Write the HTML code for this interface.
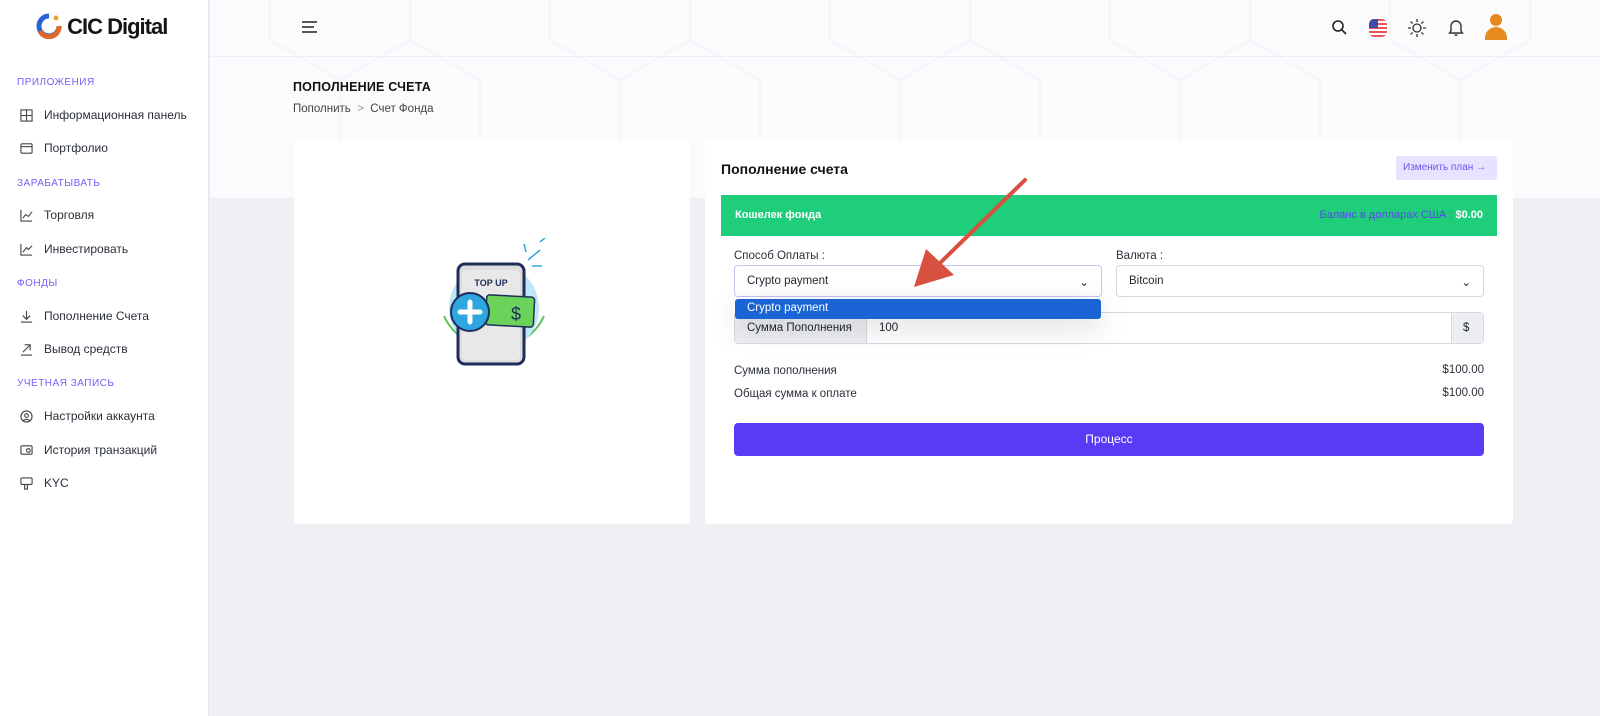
<!DOCTYPE html>
<html><head><meta charset="utf-8"><style>
*{box-sizing:border-box;margin:0;padding:0}
body{width:1600px;height:716px;overflow:hidden;font-family:"Liberation Sans",sans-serif;background:#eef0f4;position:relative;color:#1f2430}
div,span{white-space:nowrap}
.side{position:absolute;left:0;top:0;width:209px;height:716px;background:#fff;border-right:1px solid #e4e6ee}
.logo{position:absolute;left:36px;top:13px;font-weight:bold;font-size:22px;letter-spacing:-1px;color:#151515}
.sec{position:absolute;left:17px;font-size:10px;color:#7a5cf5;letter-spacing:.5px}
.it{position:absolute;left:20px;font-size:12px;color:#2a2f3a;display:flex;align-items:center;gap:11px}
.it svg{width:13px;height:13px}
.top{position:absolute;left:210px;top:0;right:0;height:198px;background:#fbfbfd}
.hdr{position:absolute;left:210px;top:0;right:0;height:57px;border-bottom:1px solid #ecedf5}
.card{position:absolute;background:#fff;border-radius:4px}
.lbl{font-size:11.5px;color:#2a2f3a}
.sel{position:absolute;height:32px;border:1px solid #d7d9e2;border-radius:4px;background:#fff;font-size:11.5px;padding:9px 12px}
</style></head><body>
<div class="top">
<svg width="1390" height="198" style="position:absolute;left:0;top:0" stroke="#f2f3f8" fill="none" stroke-width="1.5">
<path d="M60 0V40l70 40 70-40V0M130 80v118M340 0v40l70 40 70-40V0M410 80v118M620 0v40l70 40 70-40V0M690 80v118M900 0v40l70 40 70-40V0M970 80v118M1180 0v40l70 40 70-40V0M1250 80v118M200 40l70 40v118M480 40l70 40v118M760 40l70 40v118M1040 40l70 40v118"/>
</svg></div>
<div class="hdr"></div>
<div class="side">
<div class="logo"><svg width="26" height="26" viewBox="0 0 26 26" style="vertical-align:-5px"><path d="M13 3a10 10 0 1 0 10 10" stroke="#2a63d8" stroke-width="5" fill="none"/><path d="M4 18a10 10 0 0 0 19-5" stroke="#e0672a" stroke-width="5" fill="none"/><circle cx="20" cy="5" r="2.5" fill="#e7a23a"/></svg> CIC Digital</div>
<div class="sec" style="top:77px">ПРИЛОЖЕНИЯ</div>
<div class="it" style="top:108px"><svg viewBox="0 0 14 14" fill="none" stroke="#444" stroke-width="1.2"><rect x="1" y="1" width="12" height="12"/><path d="M7 1v12M1 7h12"/></svg>Информационная панель</div>
<div class="it" style="top:141px"><svg viewBox="0 0 14 14" fill="none" stroke="#444" stroke-width="1.2"><rect x="1" y="2" width="12" height="10" rx="1"/><path d="M1 5h12"/></svg>Портфолио</div>
<div class="sec" style="top:178px">ЗАРАБАТЫВАТЬ</div>
<div class="it" style="top:208px"><svg viewBox="0 0 14 14" fill="none" stroke="#444" stroke-width="1.2"><path d="M1 1v12h12M3 10l3-4 3 2 4-5"/></svg>Торговля</div>
<div class="it" style="top:242px"><svg viewBox="0 0 14 14" fill="none" stroke="#444" stroke-width="1.2"><path d="M1 1v12h12M3 10l4-5 2 2 4-4"/></svg>Инвестировать</div>
<div class="sec" style="top:278px">ФОНДЫ</div>
<div class="it" style="top:309px"><svg viewBox="0 0 14 14" fill="none" stroke="#444" stroke-width="1.2"><path d="M7 1v9M3 6l4 4 4-4M1 13h12"/></svg>Пополнение Счета</div>
<div class="it" style="top:342px"><svg viewBox="0 0 14 14" fill="none" stroke="#444" stroke-width="1.2"><path d="M3 10l8-8M5 2h6v6M1 13h12"/></svg>Вывод средств</div>
<div class="sec" style="top:378px">УЧЕТНАЯ ЗАПИСЬ</div>
<div class="it" style="top:409px"><svg viewBox="0 0 14 14" fill="none" stroke="#444" stroke-width="1.2"><circle cx="7" cy="7" r="6"/><circle cx="7" cy="6" r="2"/><path d="M3.5 11.5c2-2 5-2 7 0"/></svg>Настройки аккаунта</div>
<div class="it" style="top:443px"><svg viewBox="0 0 14 14" fill="none" stroke="#444" stroke-width="1.2"><rect x="1" y="2" width="12" height="9" rx="1"/><circle cx="9" cy="7" r="2"/></svg>История транзакций</div>
<div class="it" style="top:476px"><svg viewBox="0 0 14 14" fill="none" stroke="#444" stroke-width="1.2"><rect x="1" y="1" width="12" height="7" rx="1"/><path d="M5 8v5h3V8"/></svg>KYC</div>
</div>
<svg style="position:absolute;left:301px;top:20px" width="18" height="14" stroke="#222" stroke-width="1.6"><path d="M1 2h15M1 7h12M1 12h15"/></svg>
<svg style="position:absolute;left:1331px;top:19px" width="16" height="16" fill="none" stroke="#222" stroke-width="1.6"><circle cx="7" cy="7" r="5"/><path d="M11 11l4 4"/></svg>
<div style="position:absolute;left:1369px;top:19px;width:18px;height:18px;border-radius:5px;background:repeating-linear-gradient(#e8545a 0 2px,#fff 2px 4px);overflow:hidden"><div style="width:9px;height:9px;background:#3b4fa8"></div></div>
<svg style="position:absolute;left:1408px;top:19px" width="18" height="18" fill="none" stroke="#333" stroke-width="1.3"><circle cx="9" cy="9" r="4"/><path d="M9 0v3M9 15v3M0 9h3M15 9h3M2.6 2.6l2 2M13.4 13.4l2 2M2.6 15.4l2-2M13.4 4.6l2-2"/></svg>
<svg style="position:absolute;left:1448px;top:18px" width="16" height="18" fill="none" stroke="#333" stroke-width="1.4"><path d="M3 13V8a5 5 0 0 1 10 0v5l1.5 2h-13zM6.5 17h3"/></svg>
<div style="position:absolute;left:1485px;top:14px;width:22px;height:26px;overflow:hidden"><div style="width:12px;height:12px;border-radius:50%;background:#e58a1f;margin:0 auto"></div><div style="width:22px;height:16px;border-radius:11px 11px 0 0;background:#e58a1f;margin-top:1px"></div></div>
<div style="position:absolute;left:293px;top:80px;font-size:12.5px;font-weight:bold;color:#111;letter-spacing:.2px">ПОПОЛНЕНИЕ СЧЕТА</div>
<div style="position:absolute;left:293px;top:103px;font-size:11.5px;color:#444">Пополнить &nbsp;<span style="color:#999">&gt;</span>&nbsp; Счет Фонда</div>
<div class="card" style="left:294px;top:140px;width:396px;height:384px">
<svg style="position:absolute;left:142px;top:98px" width="112" height="130">
<path d="M8 78a55 55 0 0 0 100 0" stroke="#5ac25e" stroke-width="2" fill="none"/>
<circle cx="58" cy="70" r="45" fill="#bfe6f7"/>
<rect x="22" y="26" width="66" height="100" rx="7" fill="#ddd" stroke="#1f2d5c" stroke-width="3"/>
<rect x="26" y="32" width="58" height="90" rx="4" fill="#e8e8e8"/>
<text x="55" y="48" font-size="9" font-weight="bold" fill="#1f2d5c" text-anchor="middle" font-family="Liberation Sans">TOP UP</text>
<rect x="50" y="58" width="48" height="30" rx="3" fill="#6cd35a" stroke="#1f2d5c" stroke-width="1.5" transform="rotate(3 74 73)"/>
<text x="80" y="82" font-size="18" fill="#1f2d5c" text-anchor="middle" font-family="Liberation Sans">$</text>
<circle cx="34" cy="74" r="19" fill="#2ea6df" stroke="#1f2d5c" stroke-width="2"/>
<path d="M34 64v20M24 74h20" stroke="#fff" stroke-width="5" stroke-linecap="round"/>
<path d="M92 22l12-10M96 28h10M90 14l-2 -8M104 4l6-5" stroke="#2ea6df" stroke-width="1.5"/>
</svg></div>
<div class="card" style="left:705px;top:140px;width:808px;height:384px">
<div style="position:absolute;left:16px;top:21px;font-size:14px;font-weight:bold;color:#111">Пополнение счета</div>
<div style="position:absolute;right:16px;top:16px;width:101px;height:24px;border-radius:3px;background:#e6e2ff;color:#6a55ee;font-size:10px;padding:6px 7px">Изменить план →</div>
<div style="position:absolute;left:16px;top:55px;width:776px;height:41px;background:#1fce7a;color:#fff;font-size:11px;font-weight:bold;padding:14px 14px"><span>Кошелек фонда</span><span style="float:right"><span style="color:#5b44f0;font-weight:normal">Баланс в долларах США : </span>$0.00</span></div>
<div class="lbl" style="position:absolute;left:29px;top:110px">Способ Оплаты :</div>
<div class="lbl" style="position:absolute;left:411px;top:110px">Валюта :</div>
<div class="sel" style="left:29px;top:125px;width:368px;border-color:#c9c3f4">Crypto payment<span style="float:right">⌄</span></div>
<div class="sel" style="left:411px;top:125px;width:368px">Bitcoin<span style="float:right">⌄</span></div>
<div style="position:absolute;left:29px;top:172px;width:750px;height:32px;border:1px solid #d7d9e2;border-radius:4px;font-size:11.5px;display:flex">
<div style="width:132px;background:#eceef2;padding:9px 12px;border-right:1px solid #d7d9e2">Сумма Пополнения</div><div style="flex:1;padding:9px 12px">100</div><div style="width:32px;background:#eceef2;border-left:1px solid #d7d9e2;padding:9px 11px">$</div></div>
<div style="position:absolute;left:30px;top:159px;width:366px;height:20px;background:#1a64d6;border-radius:3px;color:#fff;font-size:11.5px;padding:3px 12px;box-shadow:0 8px 30px rgba(0,0,0,.15)">Crypto payment</div>
<div class="lbl" style="position:absolute;left:29px;top:225px">Сумма пополнения</div><div class="lbl" style="position:absolute;right:29px;top:224px">$100.00</div>
<div class="lbl" style="position:absolute;left:29px;top:248px">Общая сумма к оплате</div><div class="lbl" style="position:absolute;right:29px;top:247px">$100.00</div>
<div style="position:absolute;left:29px;top:283px;width:750px;height:33px;background:#583cf5;border-radius:4px;color:#fff;font-size:12px;text-align:center;line-height:33px">Процесс</div>
</div>
<svg style="position:absolute;left:900px;top:175px" width="135" height="120"><path d="M125 5L38 90" stroke="#d8503f" stroke-width="4" stroke-linecap="round"/><path d="M14 112l12-38 28 26z" fill="#d8503f"/></svg>
</body></html>
